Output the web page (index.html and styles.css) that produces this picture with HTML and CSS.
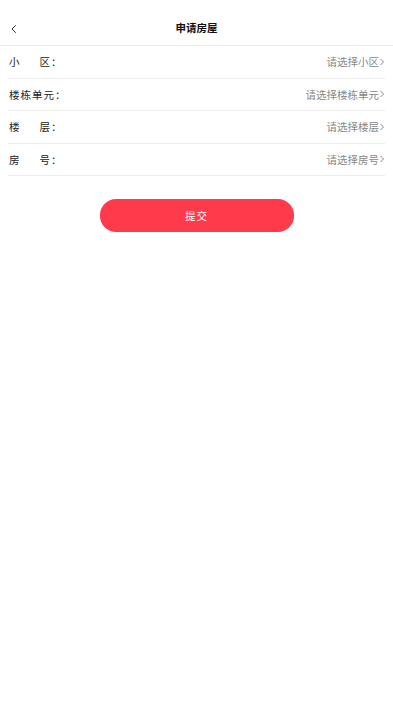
FILE: index.html
```html
<!DOCTYPE html>
<html>
<head>
    <meta charset="UTF-8"/>
    <meta name="viewport" content="width=device-width, initial-scale=1"/>
    <title>申请房屋</title>
    <link rel="stylesheet" href="styles.css">
</head>
<body>
<div class="nav_bar">
    <span class="nav_back">
        <svg width="10" height="10" viewBox="0 0 10 10"><path d="M6.5 1.5 L3 5 L6.5 8.5" fill="none" stroke="#333" stroke-width="1" stroke-linecap="round" stroke-linejoin="round"/></svg>
    </span>
    <span class="nav_title">申请房屋</span>
</div>
<div class="form_list">
    <div class="form_row">
        <span class="form_label"><span class="label_text">小区</span>：</span>
        <span class="form_value">请选择小区<svg class="arrow" width="6" height="10" viewBox="0 0 6 10"><path d="M1.5 2 L4.5 5 L1.5 8" fill="none" stroke="#888" stroke-width="1"/></svg></span>
    </div>
    <div class="form_row">
        <span class="form_label"><span class="label_text">楼栋单元</span>：</span>
        <span class="form_value">请选择楼栋单元<svg class="arrow" width="6" height="10" viewBox="0 0 6 10"><path d="M1.5 2 L4.5 5 L1.5 8" fill="none" stroke="#888" stroke-width="1"/></svg></span>
    </div>
    <div class="form_row">
        <span class="form_label"><span class="label_text">楼层</span>：</span>
        <span class="form_value">请选择楼层<svg class="arrow" width="6" height="10" viewBox="0 0 6 10"><path d="M1.5 2 L4.5 5 L1.5 8" fill="none" stroke="#888" stroke-width="1"/></svg></span>
    </div>
    <div class="form_row">
        <span class="form_label"><span class="label_text">房号</span>：</span>
        <span class="form_value">请选择房号<svg class="arrow" width="6" height="10" viewBox="0 0 6 10"><path d="M1.5 2 L4.5 5 L1.5 8" fill="none" stroke="#888" stroke-width="1"/></svg></span>
    </div>
</div>
<div class="submit_wrap">
    <button class="submit_button">提交</button>
</div>
</body>
</html>
```

FILE: styles.css
```css
html {
    height: 100%;
}

body {
    margin: 0;
    background-color: #fff;
    color: #222;
    font-family: "Noto Sans CJK SC", "Noto Sans", sans-serif;
    font-size: 10.5px;
}

.nav_bar {
    position: relative;
    height: 46px;
    padding-top: 12px;
    box-sizing: border-box;
    border-bottom: 1px solid #ececec;
    display: flex;
    align-items: center;
    justify-content: center;
}

.nav_back {
    position: absolute;
    left: 9px;
    top: 24px;
    width: 10px;
    height: 10px;
    display: flex;
}

.nav_title {
    color: #111;
    font-weight: bold;
    line-height: 1;
}

.form_list {
    margin: 0 8px;
}

.form_row {
    height: 31.5px;
    border-bottom: 1px solid #ececec;
    display: flex;
    align-items: center;
    justify-content: space-between;
    padding-left: 1px;
    white-space: nowrap;
}

.form_label {
    display: flex;
    align-items: center;
    letter-spacing: 1px;
}

.label_text {
    display: inline-block;
    min-width: 42px;
    text-align: justify;
    text-align-last: justify;
}

.form_value {
    display: flex;
    align-items: center;
    color: #888;
}

.submit_wrap {
    display: flex;
    justify-content: center;
    padding-top: 23px;
}

.submit_button {
    width: 194px;
    height: 33px;
    border: none;
    border-radius: 16px;
    background-color: #ff3a4b;
    color: #fff;
    font-family: inherit;
    font-size: 10.5px;
    letter-spacing: 1px;
}
```
